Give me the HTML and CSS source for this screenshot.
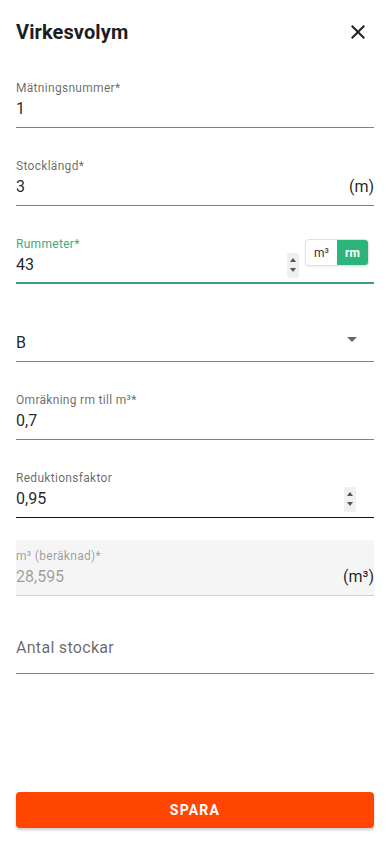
FILE: index.html
```html
<!DOCTYPE html>
<html lang="sv">
<head>
<meta charset="UTF-8" />
<meta name="viewport" content="width=device-width, initial-scale=1" />
<title>Virkesvolym</title>
<link rel="stylesheet" href="styles.css">
</head>
<body>

<div class="dialog">
  <div class="dialog-head">
    <h2>Virkesvolym</h2>
    <button class="close-btn" aria-label="Stäng">
      <svg viewBox="0 0 24 24" width="24" height="24"><path d="M19 6.41 17.59 5 12 10.59 6.41 5 5 6.41 10.59 12 5 17.59 6.41 19 12 13.41 17.59 19 19 17.59 13.41 12z" fill="#222"/></svg>
    </button>
  </div>

  <div class="form">
    <div class="field">
      <label>Mätningsnummer*</label>
      <div class="value-row"><span class="value">1</span></div>
    </div>

    <div class="field">
      <label>Stocklängd*</label>
      <div class="value-row"><span class="value">3</span><span class="unit">(m)</span></div>
    </div>

    <div class="field focused">
      <label>Rummeter*</label>
      <div class="value-row"><span class="value">43</span>
        <span class="spinner"><i class="up"></i><i class="down"></i></span>
      </div>
      <div class="toggle">
        <span class="toggle-opt">m³</span>
        <span class="toggle-opt active">rm</span>
      </div>
    </div>

    <div class="field select">
      <span class="caret"></span>
      <div class="value-row"><span class="value">B</span></div>
    </div>

    <div class="field">
      <label>Omräkning rm till m³*</label>
      <div class="value-row"><span class="value">0,7</span></div>
    </div>

    <div class="field hovered">
      <label>Reduktionsfaktor</label>
      <div class="value-row"><span class="value">0,95</span>
        <span class="spinner"><i class="up"></i><i class="down"></i></span>
      </div>
    </div>

    <div class="field disabled">
      <label>m³ (beräknad)*</label>
      <div class="value-row"><span class="value">28,595</span><span class="unit">(m³)</span></div>
    </div>

    <div class="field empty">
      <div class="value-row"><span class="placeholder">Antal stockar</span></div>
    </div>
  </div>

  <button class="save-btn">Spara</button>
</div>

</body>
</html>
```

FILE: styles.css
```css
body {
  margin: 0;
  font-family: Roboto, "Liberation Sans", Arial, sans-serif;
  color: rgba(0, 0, 0, 0.87);
  background: #fff;
}
.dialog {
  width: 390px;
  height: 844px;
  box-sizing: border-box;
  padding: 0 16px;
  display: flex;
  flex-direction: column;
}
.dialog-head {
  height: 64px;
  display: flex;
  align-items: center;
  justify-content: space-between;
}
.dialog-head h2 {
  margin: 0;
  font-size: 20px;
  font-weight: 700;
  color: #1e1e1e;
  letter-spacing: 0.1px;
}
.close-btn {
  border: none;
  background: none;
  padding: 0;
  width: 24px;
  height: 24px;
  margin-right: 4px;
  cursor: pointer;
}
.form {
  display: flex;
  flex-direction: column;
  gap: 22px;
  margin-top: 8px;
}
.field {
  position: relative;
  height: 56px;
  box-sizing: border-box;
  border-bottom: 1px solid rgba(0, 0, 0, 0.5);
  display: flex;
  flex-direction: column;
  justify-content: flex-end;
  padding-bottom: 7px;
}
.field label {
  font-size: 12px;
  line-height: 16px;
  color: rgba(0, 0, 0, 0.6);
  letter-spacing: 0.3px;
}
.value-row {
  display: flex;
  align-items: center;
  height: 24px;
}
.value {
  font-size: 16px;
  flex: 1;
}
.unit {
  font-size: 16px;
}
.field.focused {
  border-bottom: 2px solid #3a9d7e;
  padding-bottom: 6px;
}
.field.focused label {
  color: #3aaa84;
}
.field.focused .value-row {
  padding-right: 75px;
}
.field.hovered {
  border-bottom-color: #111;
}
.field.hovered .value-row {
  padding-right: 18px;
}
.spinner {
  width: 12px;
  height: 25px;
  background: #f0f0f0;
  border-radius: 2px;
  display: flex;
  flex-direction: column;
  justify-content: space-evenly;
  align-items: center;
  margin-top: 2px;
}
.spinner i {
  width: 0;
  height: 0;
  border-left: 3.5px solid transparent;
  border-right: 3.5px solid transparent;
}
.spinner .up {
  border-bottom: 4px solid #555;
}
.spinner .down {
  border-top: 4px solid #555;
}
.toggle {
  position: absolute;
  right: 5px;
  top: 11px;
  display: flex;
  height: 27px;
  border-radius: 4px;
  overflow: hidden;
  border: 1px solid #e2e2e2;
  box-sizing: border-box;
  box-shadow: 0 1px 2px rgba(0, 0, 0, 0.08);
}
.toggle-opt {
  width: 31px;
  display: flex;
  align-items: center;
  justify-content: center;
  font-size: 12px;
  color: #333;
}
.toggle-opt.active {
  background: #2db47c;
  color: #fff;
  font-weight: 700;
}
.field.select .caret {
  position: absolute;
  right: 17px;
  top: 31px;
  width: 0;
  height: 0;
  border-left: 5px solid transparent;
  border-right: 5px solid transparent;
  border-top: 5px solid #666;
}
.field.disabled {
  background: #f5f5f5;
  border-top-left-radius: 4px;
  border-top-right-radius: 4px;
  border-bottom-color: rgba(0, 0, 0, 0.15);
}
.field.disabled label {
  color: rgba(0, 0, 0, 0.38);
}
.field.disabled .value {
  color: rgba(0, 0, 0, 0.38);
}
.field.empty {
  padding-bottom: 14px;
}
.placeholder {
  font-size: 16px;
  color: rgba(0, 0, 0, 0.6);
  letter-spacing: 0.3px;
}
.save-btn {
  margin-top: auto;
  margin-bottom: 16px;
  height: 36px;
  border: none;
  border-radius: 4px;
  background: #ff4500;
  color: #fff;
  font-family: inherit;
  font-size: 14px;
  font-weight: 700;
  letter-spacing: 1.2px;
  text-transform: uppercase;
  box-shadow: 0 2px 3px rgba(0, 0, 0, 0.2);
  cursor: pointer;
}
```
